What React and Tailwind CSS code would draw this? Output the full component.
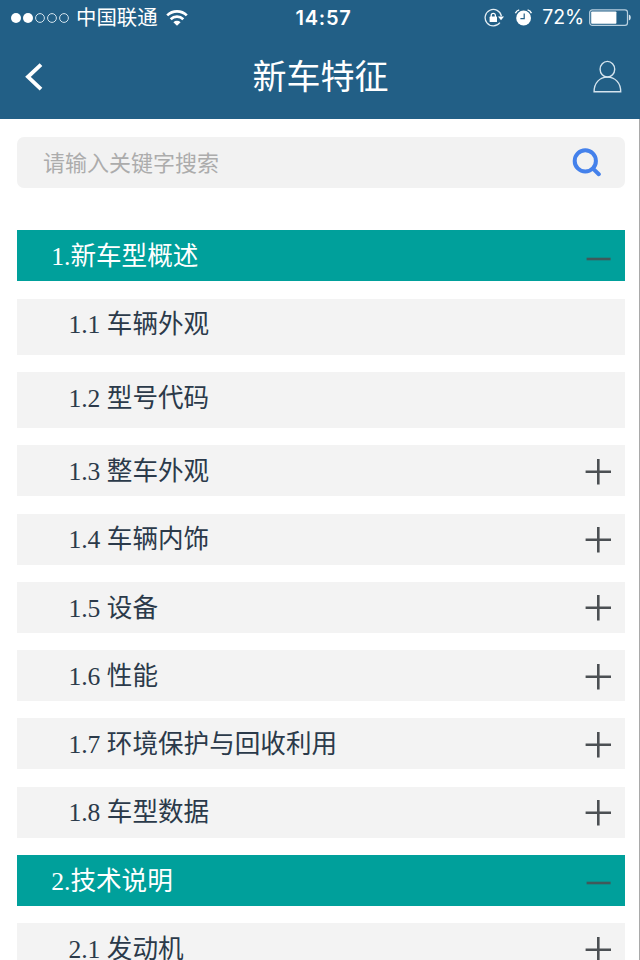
import { useState } from 'react'

const initialSections = [
  {
    title: '1.新车型概述',
    items: [
      { title: '1.1 车辆外观', leaf: true },
      { title: '1.2 型号代码', leaf: true },
      { title: '1.3 整车外观' },
      { title: '1.4 车辆内饰' },
      { title: '1.5 设备' },
      { title: '1.6 性能' },
      { title: '1.7 环境保护与回收利用' },
      { title: '1.8 车型数据' },
    ],
  },
  {
    title: '2.技术说明',
    items: [{ title: '2.1 发动机' }],
  },
]

const SignalDots = () => (
  <svg className="h-[12px] w-[60px]" viewBox="0 0 60 12" fill="none">
    <circle cx="6" cy="6" r="5" fill="#fff" />
    <circle cx="18" cy="6" r="5" fill="#fff" />
    <circle cx="30" cy="6" r="4.4" stroke="#d5e4ee" strokeWidth="1" />
    <circle cx="42" cy="6" r="4.4" stroke="#d5e4ee" strokeWidth="1" />
    <circle cx="54" cy="6" r="4.4" stroke="#d5e4ee" strokeWidth="1" />
  </svg>
)

const WifiIcon = () => (
  <svg className="h-[16px] w-[22px]" viewBox="0 0 22 16" fill="none" stroke="#fff" strokeWidth="2.7">
    <path d="M1.2 5.4a14 14 0 0 1 19.6 0" />
    <path d="M4.7 9.2a9 9 0 0 1 12.6 0" />
    <path d="M7.4 12.2a5.2 5.2 0 0 1 7.2 0L11 15.8z" fill="#fff" stroke="none" />
  </svg>
)

const RotationLockIcon = () => (
  <svg className="h-[20px] w-[21px]" viewBox="0 0 21 20" fill="none">
    <path d="M18.4 8.2A8.2 8.2 0 1 0 16.9 14.6" stroke="#e3edf3" strokeWidth="1.3" />
    <path d="M15 8.4h6l-3 3.9z" fill="#fff" />
    <path d="M8.2 9V7.4a2.1 2.1 0 0 1 4.2 0V9" stroke="#fff" strokeWidth="1.3" />
    <rect x="6.6" y="8.6" width="7.4" height="5.4" rx="0.6" fill="#fff" />
  </svg>
)

const AlarmIcon = () => (
  <svg className="h-[18px] w-[18px]" viewBox="0 0 18 18" fill="none">
    <circle cx="9.6" cy="9" r="7.4" fill="#fff" />
    <path d="M10.2 4.6v5H6.4" stroke="#225f86" strokeWidth="1.2" />
    <path d="M1.4 4.2Q2.4 1.6 5.2 0.8M17.4 4.2Q16.4 1.6 13.6 0.8" stroke="#fff" strokeWidth="1.4" />
  </svg>
)

const BatteryIcon = () => (
  <svg className="h-[18px] w-[43px]" viewBox="0 0 43 18" fill="none">
    <rect x="0.7" y="0.8" width="37.8" height="15.6" rx="2.6" stroke="#b9d0df" strokeWidth="1.2" />
    <rect x="2.2" y="2.4" width="25.2" height="12.4" rx="0.8" fill="#fff" />
    <path d="M39.8 5.6c2.6.6 2.6 5.4 0 6z" fill="#d5e4ee" />
  </svg>
)

const StatusBar = () => (
  <div className="flex h-[35px] items-center text-white">
    <div className="flex flex-1 items-center pl-[10px]">
      <SignalDots />
      <span className="ml-[6px] pt-[1px] text-[20.4px] leading-none">中国联通</span>
      <span className="ml-[8px]">
        <WifiIcon />
      </span>
    </div>
    <span className="pt-[1px] pl-[5px] font-[Inter,sans-serif] text-[20px] font-semibold tracking-[0.8px]">14:57</span>
    <div className="flex flex-1 items-center justify-end pr-[8px]">
      <RotationLockIcon />
      <span className="ml-[10px]">
        <AlarmIcon />
      </span>
      <span className="ml-[10px] pt-[1px] font-[Inter,sans-serif] text-[19.5px] tracking-[-0.1px]">72%</span>
      <span className="ml-[5px]">
        <BatteryIcon />
      </span>
    </div>
  </div>
)

const TitleBar = () => (
  <div className="flex h-[84px] items-center justify-between pr-[17px] pl-[24px] text-white">
    <svg className="h-[30px] w-[20px]" viewBox="0 0 20 30" fill="none" stroke="#fff" strokeWidth="3.9">
      <path d="M17 2.6L4 14.8l13 12.4" />
    </svg>
    <h1 className="pt-[2px] pl-[4px] text-[34px] leading-none">新车特征</h1>
    <svg className="h-[34px] w-[30px]" viewBox="0 0 30 34" fill="none" stroke="#d5e4ee" strokeWidth="1.4">
      <ellipse cx="14.4" cy="9.2" rx="7.3" ry="7.8" />
      <path d="M1.1 31.7C1.1 22.9 6.6 17.1 14.4 17.1s13.3 5.8 13.3 14.6z" />
    </svg>
  </div>
)

const SearchBar = () => (
  <div className="flex h-[51px] items-center justify-between rounded-[7px] bg-[#f2f2f2] pr-[23px] pl-[26px]">
    <input
      className="w-[400px] bg-transparent pt-[3px] text-[22px] leading-none outline-none placeholder:text-[#acacac]"
      placeholder="请输入关键字搜索"
    />
    <svg className="h-[30px] w-[30px]" viewBox="0 0 30 30" fill="none" stroke="#4481eb" strokeWidth="4">
      <circle cx="13.3" cy="13.9" r="10.6" />
      <path d="M21 21.6l5.8 5.6" strokeLinecap="round" />
    </svg>
  </div>
)

const ToggleIcon = ({ open }) => (
  <svg className="h-[28px] w-[28px]" viewBox="0 0 28 28" fill="none" strokeWidth="2.6">
    {open ? (
      <path d="M2.6 17h24" stroke="#40595a" />
    ) : (
      <path d="M1.6 14.8h25.4M14.3 2.1v25.4" stroke="#4b4f53" />
    )}
  </svg>
)

const App = () => {
  const [openSections, setOpenSections] = useState([0, 1])

  const toggle = (index) => {
    setOpenSections((prev) => (prev.includes(index) ? prev.filter((i) => i !== index) : [...prev, index]))
  }

  return (
    <div className="flex h-[960px] w-[640px] flex-col overflow-hidden bg-white font-['Liberation_Serif','Noto_Sans_CJK_SC',sans-serif]">
      <header className="h-[119px] shrink-0 bg-[#225f86]">
        <StatusBar />
        <TitleBar />
      </header>

      <main className="min-h-0 flex-1 overflow-hidden border-r border-[#a9a9a9] pt-[17.6px] pr-[14.4px] pl-[17px]">
        <SearchBar />
        <div className="mt-[42.7px] flex flex-col gap-[17.07px]">
          {initialSections.map((section, index) => {
            const open = openSections.includes(index)
            return (
              <section key={section.title} className="flex flex-col gap-[17.07px]">
                <button
                  type="button"
                  onClick={() => toggle(index)}
                  className="flex h-[51.2px] w-full items-center justify-between bg-[#00a09b] pr-[13px] pl-[34.2px] text-[25.6px] text-white"
                >
                  <span className="pt-[2.4px] leading-[50px]">{section.title}</span>
                  <ToggleIcon open={open} />
                </button>
                {open &&
                  section.items.map((item) => (
                    <div
                      key={item.title}
                      className={
                        item.leaf
                          ? 'h-[56.3px] bg-[#f3f3f3] pt-[1.8px] pl-[51.4px] text-[25.6px] leading-[50px] text-[#2b3a4a]'
                          : 'flex h-[51.2px] items-center justify-between bg-[#f3f3f3] pr-[13px] pl-[51.4px] text-[25.6px] text-[#2b3a4a]'
                      }
                    >
                      <span className={item.leaf ? '' : 'pt-[2.4px] leading-[50px]'}>{item.title}</span>
                      {!item.leaf && <ToggleIcon />}
                    </div>
                  ))}
              </section>
            )
          })}
        </div>
      </main>
    </div>
  )
}

export default App
